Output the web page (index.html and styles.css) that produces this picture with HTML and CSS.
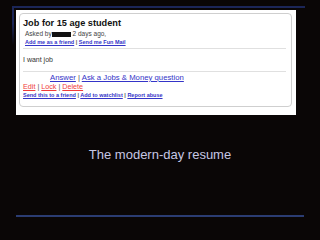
FILE: index.html
```html
<!DOCTYPE html>
<html lang="en">
  <head>
    <meta charset="UTF-8">
    <title>The modern-day resume</title>
    <link rel="stylesheet" href="styles.css">
  </head>
  <body>
    <div class="slide">
      <div class="frame">
        <div class="shot">
          <div class="card">
            <div class="title">Job for 15 age student</div>
            <div class="asked">Asked by<span class="redact"></span> 2 days ago,</div>
            <div class="tiny"><a href="#">Add me as a friend</a> | <a href="#">Send me Fun Mail</a></div>
            <div class="rule"></div>
            <div class="body-text">I want job</div>
            <div class="rule second"></div>
            <div class="answer"><a href="#">Answer</a> | <a href="#">Ask a Jobs &amp; Money question</a></div>
            <div class="admin"><a href="#">Edit</a> | <a href="#">Lock</a> | <a href="#">Delete</a></div>
            <div class="tiny"><a href="#">Send this to a friend</a> | <a href="#">Add to watchlist</a> | <a href="#">Report abuse</a></div>
          </div>
        </div>
      </div>
      <div class="caption">The modern-day resume</div>
      <div class="baseline"></div>
    </div>
  </body>
</html>
```

FILE: styles.css
```css
html, body {
  margin: 0;
  padding: 0;
  background: #0a0606;
  font-family: "Liberation Sans", Arial, sans-serif;
}

.slide {
  width: 320px;
  height: 240px;
  padding-top: 6px;
  box-sizing: border-box;
}

.frame {
  margin-left: 12px;
  width: 293px;
  padding: 2px 0 0 2px;
  border-top: 2px solid #22305e;
  border-left: 2px solid transparent;
  border-image: linear-gradient(#1c2658, #1c2658 15%, transparent 35%) 1;
  border-right: 0;
  border-bottom: 0;
  box-sizing: border-box;
}

.shot {
  width: 280px;
  height: 105px;
  background: #fff;
  padding: 3px 4px 0 3px;
  box-sizing: border-box;
}

.card {
  height: 94px;
  border: 1px solid #cfcfcf;
  border-radius: 4px;
  padding: 4px 4px 0 3px;
  box-sizing: border-box;
  color: #333;
}

.title {
  font-size: 9.2px;
  line-height: 11px;
  font-weight: bold;
  color: #111;
}

.asked {
  margin-top: 1px;
  padding-left: 2px;
  font-size: 6.5px;
  line-height: 8px;
  color: #444;
}

.redact {
  display: inline-block;
  width: 19px;
  height: 5px;
  background: #111;
  vertical-align: -0.5px;
}

.tiny {
  font-size: 5.5px;
  line-height: 8px;
  font-weight: bold;
}

.asked + .tiny {
  padding-left: 2px;
}

a {
  color: #3434c8;
}

.tiny, .answer {
  color: #555;
}

.rule {
  height: 1px;
  background: #e0e0e0;
  margin: 2px 1px 7px 0;
}

.rule.second {
  margin: 7px 1px 1px 0;
}

.body-text {
  font-size: 7px;
  line-height: 8px;
  color: #333;
}

.answer {
  margin-left: 27px;
  font-size: 7.75px;
  line-height: 10px;
}

.admin {
  font-size: 7.2px;
  line-height: 8px;
  color: #555;
}

.admin a {
  color: #f03c3c;
}

.caption {
  margin-top: 32px;
  text-align: center;
  font-size: 13px;
  line-height: 16px;
  color: #c6c6e4;
}

.baseline {
  margin: 52px 0 0 16px;
  width: 288px;
  height: 2px;
  background: #2b3c72;
}
```
